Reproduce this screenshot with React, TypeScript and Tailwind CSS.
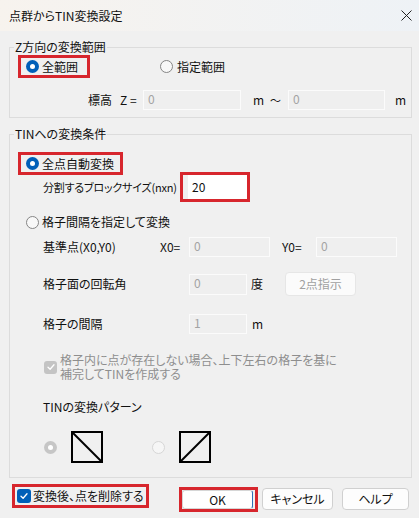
import React from 'react';

const RED = 'border-[#d7262d]';

function Radio({ checked, disabled }: { checked?: boolean; disabled?: boolean }) {
  if (checked) {
    return (
      <span className={`w-[13px] h-[13px] rounded-full flex items-center justify-center shrink-0 ${disabled ? 'bg-[#c6c6c6]' : 'bg-[#005fb8]'}`}>
        <span className="block w-[5px] h-[5px] rounded-full bg-white" />
      </span>
    );
  }
  return (
    <span className={`block w-[13px] h-[13px] rounded-full border shrink-0 ${disabled ? 'border-[#d6d6d6] bg-[#f6f6f6]' : 'border-[#858585] bg-[#f8f8f8]'}`} />
  );
}

function Field({ value, w, h = 'h-[20px]' }: { value: string; w: string; h?: string }) {
  return (
    <div className={`${w} ${h} shrink-0 border border-[#fbfbfb] bg-[#efefef] pl-[4px] text-[#a3a3a3] leading-[16px]`}>
      {value}
    </div>
  );
}

function Check({ color }: { color: string }) {
  return (
    <svg width="10" height="10" viewBox="0 0 10 10">
      <path d="M2 5.2 L4.1 7.2 L8 2.8" fill="none" stroke={color} strokeWidth="1.3" strokeLinecap="round" strokeLinejoin="round" />
    </svg>
  );
}

function Pattern({ flip }: { flip?: boolean }) {
  return (
    <svg width="32" height="32" viewBox="0 0 32 32" className="block shrink-0">
      <rect x="1" y="1" width="30" height="30" fill="none" stroke="#000" strokeWidth="2" />
      {flip ? (
        <line x1="1" y1="31" x2="31" y2="1" stroke="#000" strokeWidth="2" />
      ) : (
        <line x1="1" y1="1" x2="31" y2="31" stroke="#000" strokeWidth="2" />
      )}
    </svg>
  );
}

export default function App() {
  return (
    <div className="w-[419px] h-[518px] overflow-hidden bg-[#f0f0f0] text-[12px] leading-[16px] text-[#111] font-['Noto_Sans_CJK_JP','Noto_Sans',sans-serif] [font-feature-settings:'palt']">
      {/* title bar */}
      <div className="h-[31px] flex items-center justify-between pl-[9px] pr-[6px] bg-linear-to-r from-[#f7f3ee] to-[#eef2f6]">
        <span className="text-[12px]">点群からTIN変換設定</span>
        <svg width="11" height="11" viewBox="0 0 11 11" className="mr-[1px]">
          <path d="M0.5 0.5 L10.5 10.5 M10.5 0.5 L0.5 10.5" stroke="#222" strokeWidth="1" />
        </svg>
      </div>

      <div className="px-[9px]">
        {/* Z range */}
        <fieldset className="mt-[8px] w-[403px] border border-[#dcdcdc] pb-[7px]">
          <legend className="ml-[4px] px-[1px] leading-[16px]">Z方向の変換範囲</legend>
          <div className="flex items-center h-[23px]">
            <span className={`ml-[8px] w-[72px] h-[23px] border-[3px] ${RED} flex items-center pl-[5px] gap-[3px]`}>
              <Radio checked />
              <span>全範囲</span>
            </span>
            <span className="ml-[70px] flex items-center gap-[4px]">
              <Radio />
              <span>指定範囲</span>
            </span>
          </div>
          <div className="mt-[12px] h-[20px] flex items-center">
            <span className="ml-[78px] w-[32px]">標高</span>
            <span className="w-[23px]">Z =</span>
            <Field value="0" w="w-[98px]" />
            <span className="ml-[12px] w-[17px]">m</span>
            <span className="w-[18px] text-[11px]">〜</span>
            <Field value="0" w="w-[97px]" />
            <span className="ml-[10px]">m</span>
          </div>
        </fieldset>

        {/* TIN conditions */}
        <fieldset className="mt-[8px] w-[403px] border border-[#dcdcdc] pb-[14px]">
          <legend className="ml-[4px] px-[1px] leading-[16px]">TINへの変換条件</legend>
          <div className="mt-[10px] flex h-[23px]">
            <span className={`ml-[8px] w-[105px] h-[23px] border-[3px] ${RED} flex items-center pl-[5px] gap-[3px]`}>
              <Radio checked />
              <span>全点自動変換</span>
            </span>
          </div>
          <div className="mt-[-3px] h-[30px] flex items-center">
            <span className="ml-[33px] w-[137px] whitespace-nowrap text-[11px] tracking-[-0.2px]">分割するブロックサイズ(nxn)</span>
            <span className={`w-[70px] h-[30px] border-[3px] ${RED} flex`}>
              <span className="ml-[5px] w-[59px] h-full bg-white pl-[4px] flex items-center">20</span>
            </span>
          </div>
          <div className="mt-[9px] h-[22px] flex items-center gap-[3px]">
            <span className="ml-[16px]"><Radio /></span>
            <span>格子間隔を指定して変換</span>
          </div>
          <div className="mt-[4px] h-[20px] flex items-center">
            <span className="ml-[33px] w-[117px]">基準点(X0,Y0)</span>
            <span className="w-[29px]">X0=</span>
            <Field value="0" w="w-[81px]" />
            <span className="ml-[12px] w-[34px]">Y0=</span>
            <Field value="0" w="w-[81px]" />
          </div>
          <div className="mt-[15px] h-[24px] flex items-center">
            <span className="ml-[33px] w-[146px]">格子面の回転角</span>
            <Field value="0" w="w-[58px]" h="h-[21px]" />
            <span className="ml-[4px]">度</span>
            <div className="ml-[22px] w-[71px] h-[24px] rounded-[4px] border border-[#e6e6e6] bg-[#fbfbfb] text-[#a0a0a0] flex items-center justify-center">
              2点指示
            </div>
          </div>
          <div className="mt-[18px] h-[20px] flex items-center">
            <span className="ml-[33px] w-[146px]">格子の間隔</span>
            <Field value="1" w="w-[58px]" />
            <span className="ml-[5px]">m</span>
          </div>
          <div className="mt-[19px] flex items-center">
            <span className="ml-[34px] w-[13px] h-[13px] rounded-[3px] bg-[#c4c4c4] flex items-center justify-center shrink-0">
              <Check color="#ffffff" />
            </span>
            <div className="ml-[3px] text-[#8e8e8e]">
              <div className="leading-[14px]">格子内に点が存在しない場合、上下左右の格子を基に</div>
              <div className="leading-[14px]">補完してTINを作成する</div>
            </div>
          </div>
          <div className="mt-[18px] ml-[33px] leading-[16px]">TINの変換パターン</div>
          <div className="mt-[16px] h-[32px] flex items-center">
            <span className="ml-[34px]"><Radio checked disabled /></span>
            <span className="ml-[14px]"><Pattern /></span>
            <span className="ml-[49px]"><Radio disabled /></span>
            <span className="ml-[14px]"><Pattern flip /></span>
          </div>
        </fieldset>

        {/* bottom bar */}
        <div className="mt-[6px] flex items-start">
          <span className={`ml-[3px] w-[137px] h-[24px] border-[3px] ${RED} flex items-center pl-[2px] gap-[2px]`}>
            <span className="w-[14px] h-[14px] rounded-[3px] bg-[#005fb8] flex items-center justify-center shrink-0">
              <Check color="#ffffff" />
            </span>
            <span className="whitespace-nowrap">変換後、点を削除する</span>
          </span>
          <span className={`mt-[3px] ml-[30px] w-[79px] h-[25px] border-[3px] ${RED} flex`}>
            <span className="w-[71px] h-full rounded-[3px] bg-white border border-[#d6d6d6] border-r-[#2f6fb6] flex items-center justify-center">
              OK
            </span>
          </span>
          <div className="mt-[4px] ml-[4px] w-[71px] h-[22px] rounded-[4px] border border-[#d0d0d0] bg-[#fdfdfd] flex items-center justify-center">
            キャンセル
          </div>
          <div className="mt-[4px] ml-[9px] w-[67px] h-[22px] rounded-[4px] border border-[#d0d0d0] bg-[#fdfdfd] flex items-center justify-center">
            ヘルプ
          </div>
        </div>
      </div>
    </div>
  );
}
